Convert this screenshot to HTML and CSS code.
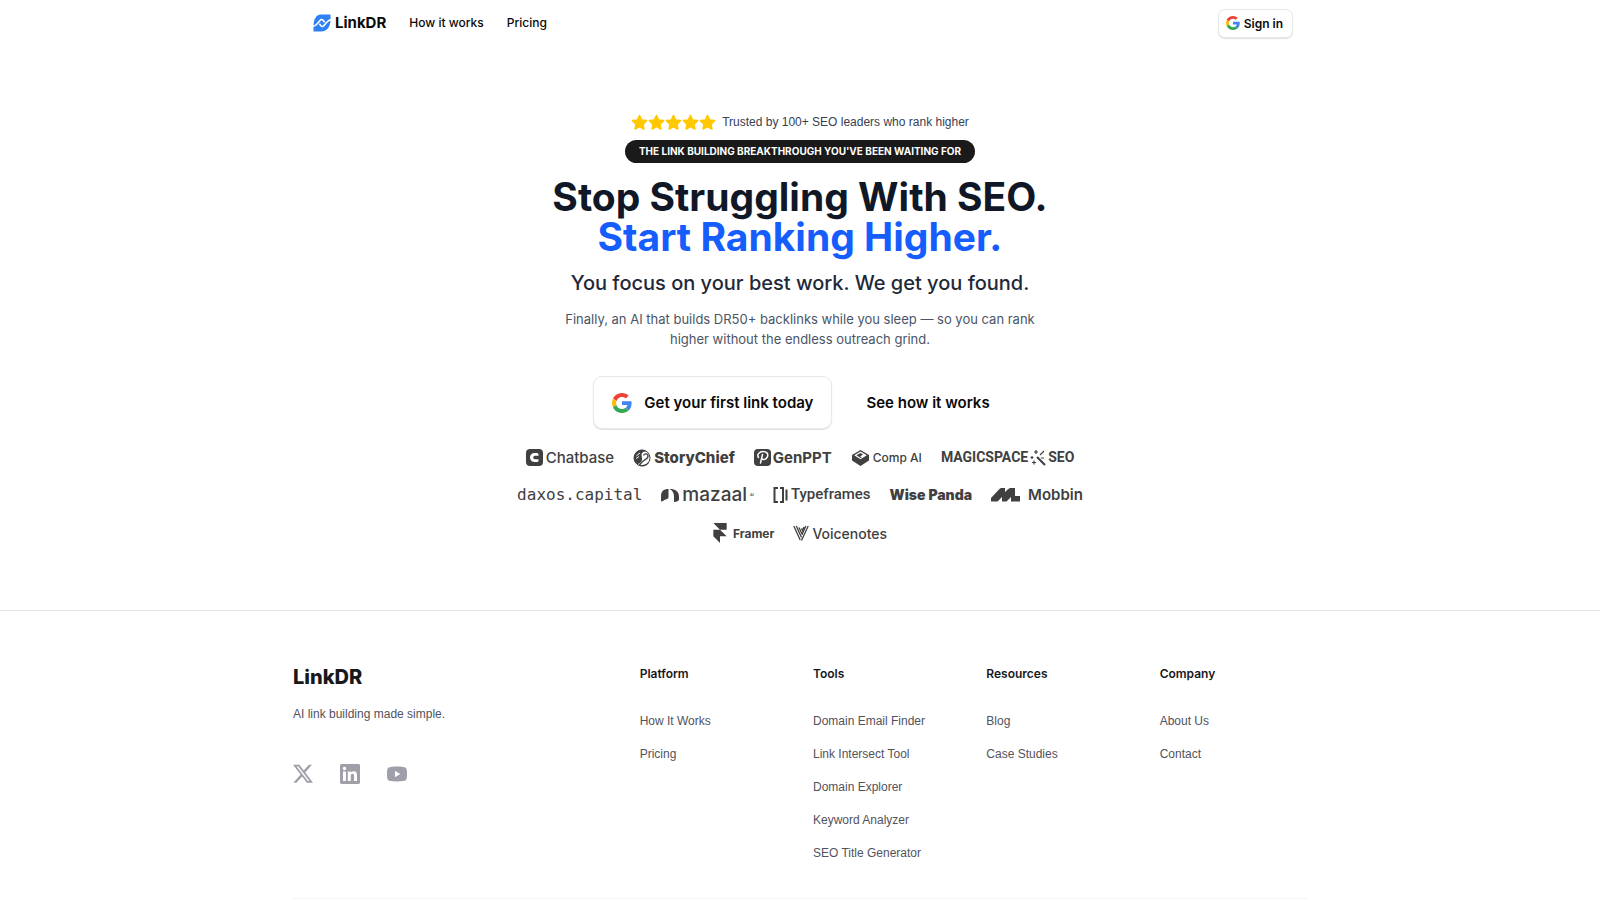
FILE: index.html
```
<!DOCTYPE html>
<html lang="en">
<head>
    <meta charset="UTF-8">
    <meta name="viewport" content="width=device-width, initial-scale=1.0">
    <title>LinkDR</title>
    <link rel="stylesheet" href="styles.css">
</head>
<body>
    <!-- shared shapes -->
    <svg class="defs" width="0" height="0" aria-hidden="true">
        <symbol id="google" viewBox="0 0 48 48">
            <path fill="#ea4335" d="M24 9.5c3.54 0 6.71 1.22 9.21 3.6l6.85-6.85C35.9 2.38 30.47 0 24 0 14.62 0 6.51 5.38 2.56 13.22l7.98 6.19C12.43 13.72 17.74 9.5 24 9.5z"/>
            <path fill="#4285f4" d="M46.98 24.55c0-1.57-.15-3.09-.38-4.55H24v9.02h12.94c-.58 2.96-2.26 5.48-4.78 7.18l7.73 6c4.51-4.18 7.09-10.36 7.09-17.65z"/>
            <path fill="#fbbc05" d="M10.53 28.59c-.48-1.45-.76-2.99-.76-4.59s.27-3.14.76-4.59l-7.98-6.19C.92 16.46 0 20.12 0 24s.92 7.54 2.56 10.78l7.97-6.19z"/>
            <path fill="#34a853" d="M24 48c6.48 0 11.93-2.13 15.89-5.81l-7.73-6c-2.15 1.45-4.92 2.3-8.16 2.3-6.26 0-11.57-4.22-13.47-9.91l-7.98 6.19C6.51 42.62 14.62 48 24 48z"/>
        </symbol>
        <symbol id="star" viewBox="0 0 24 24">
            <path d="M12 2.2l3 6.3 6.9.9-5 4.8 1.2 6.9-6.1-3.4-6.1 3.4 1.2-6.9-5-4.8 6.9-.9z" stroke="currentColor" stroke-width="2.4" stroke-linejoin="round" fill="currentColor"/>
        </symbol>
    </svg>

    <header class="header">
        <nav class="nav">
            <a href="#" class="brand">
                <svg width="18" height="18" viewBox="0 0 18 18">
                    <path fill="#2f80f5" d="M8 .5h9.500V6c0 7-4 11.500-9.500 11.500H.5V12C.5 5 3.500.5 8 .5z"/>
                    <path fill="none" stroke="#fff" stroke-width="1.600" d="M0 12.300c2 0 3.200-1.300 4.500-2.800L7 6.500c1-1.200 2.200-1.200 3.100-.2l1.500 1.900M18 5.700c-2 0-3.200 1.300-4.500 2.800L11 11.500c-1 1.200-2.200 1.200-3.100.2L6.400 9.800"/>
                </svg>
                LinkDR
            </a>
            <a href="#" class="nav-link">How it works</a>
            <a href="#" class="nav-link">Pricing</a>
        </nav>
        <button type="button" class="btn btn-small">
            <svg width="14" height="14"><use href="#google"/></svg>
            Sign in
        </button>
    </header>

    <main class="hero">
        <div class="trust">
            <div class="stars">
                <svg width="17" height="17"><use href="#star"/></svg>
                <svg width="17" height="17"><use href="#star"/></svg>
                <svg width="17" height="17"><use href="#star"/></svg>
                <svg width="17" height="17"><use href="#star"/></svg>
                <svg width="17" height="17"><use href="#star"/></svg>
            </div>
            <span>Trusted by 100+ SEO leaders who rank higher</span>
        </div>
        <div class="pill">THE LINK BUILDING BREAKTHROUGH YOU'VE BEEN WAITING FOR</div>
        <h1 class="title">Stop Struggling With SEO.<br><span class="accent">Start Ranking Higher.</span></h1>
        <h2 class="subtitle">You focus on your best work. We get you found.</h2>
        <p class="lead">Finally, an AI that builds DR50+ backlinks while you sleep — so you can rank<br>higher without the endless outreach grind.</p>

        <div class="actions">
            <button type="button" class="btn btn-large">
                <svg width="20" height="20"><use href="#google"/></svg>
                Get your first link today
            </button>
            <a href="#" class="see-how">See how it works</a>
        </div>

        <div class="logos">
            <div class="logo chatbase">
                <svg width="17" height="17" viewBox="0 0 17 17">
                    <rect width="17" height="17" rx="4" fill="currentColor"/>
                    <path d="M12.500 6.700V5.500A1.500 1.500 0 0 0 11 4H8.500a4.500 4.500 0 0 0 0 9H11a1.500 1.500 0 0 0 1.500-1.500v-1.200H9a1.800 1.800 0 0 1 0-3.600z" fill="#fff"/>
                </svg>
                <span>Chatbase</span>
            </div>
            <div class="logo storychief">
                <svg width="18" height="18" viewBox="0 0 18 18">
                    <circle cx="9" cy="9" r="8" fill="#fff" stroke="currentColor" stroke-width="1"/>
                    <path d="M1 9a8 8 0 0 1 13-6.300C11 2 8.500 3.500 8.500 6c0 2 1 3 .5 5-.4 1.800-2 3.300-4.500 4.200A8 8 0 0 1 1 9z" fill="currentColor"/>
                    <path d="M10.500 6.500c1-2 3.500-2 4.300-.5.700 2-.8 3.800-3 4.800-2 .9-3.300 2.400-5.300 5.200 3.500 1.200 7 .5 9-2.500" fill="none" stroke="currentColor" stroke-width="1.300"/>
                    <path d="M3.500 6.800L7 4M3.200 9.500L6 7.500" stroke="#fff" stroke-width="1"/>
                </svg>
                <span>StoryChief</span>
            </div>
            <div class="logo genppt">
                <svg width="17" height="17" viewBox="0 0 17 17">
                    <rect width="17" height="17" rx="4" fill="currentColor"/>
                    <path d="M8.500 5.500L6.500 14M4.500 8.500c-2-3 1-6 4.500-6s5.500 2 4.500 5-4.500 4-6 2" fill="none" stroke="#fff" stroke-width="1.500" stroke-linecap="round"/>
                </svg>
                <span>GenPPT</span>
            </div>
            <div class="logo comp">
                <svg width="19" height="18" viewBox="0 0 19 18">
                    <path d="M9.500 1L18 6v5.500L9.500 17 1 11.500V6z" fill="currentColor"/>
                    <path d="M9.500 2.500L15.800 6.300 9.500 10.200 3.200 6.300z" fill="#fff"/>
                    <path d="M9.500 4l2.500 1.500-3 2L11 8.300 9.500 9 5.500 6.300z" fill="currentColor"/>
                </svg>
                <span>Comp AI</span>
            </div>
            <div class="logo magic">
                <span>MAGICSPACE</span>
                <svg width="16" height="16" viewBox="0 0 16 16">
                    <path d="M7 7l8 8" stroke="currentColor" stroke-width="2.200"/>
                    <path d="M6 0v4M4 2h4M2 6v3M.5 7.500h3M4 10.500v4M2 12.500h4M14 1l-4 4M11 8h3" stroke="currentColor" stroke-width="1.200"/>
                </svg>
                <span>SEO</span>
            </div>
            <div class="logo daxos"><span>daxos.capital</span></div>
            <div class="logo mazaal">
                <svg width="18" height="14" viewBox="0 0 18 14">
                    <path d="M0 13.500V8C0 3.500 2.500 1 7.500 1v8c0 2-1.500 2-3 2.500S2 13.500 0 13.500zM8.500 1c6 0 9.500 2.500 9.500 7.500V12c-1 1.200-2.500 2-5 2V8.500c0-3.500-1.500-6-4.500-7.500z" fill="currentColor"/>
                </svg>
                <span>mazaal</span>
                <small>AI</small>
            </div>
            <div class="logo typeframes">
                <svg width="15" height="16" viewBox="0 0 15 16">
                    <path d="M5 1H1.500v14H5M7 1h3v14H7M13.500 2.500v11" fill="none" stroke="currentColor" stroke-width="2"/>
                </svg>
                <span>Typeframes</span>
            </div>
            <div class="logo panda"><span>Wise Panda</span></div>
            <div class="logo mobbin">
                <svg width="29" height="14" viewBox="0 0 29 14">
                    <path d="M0 13.500V10L8 1.500C9 .4 10 0 11 0h3v4l3-2.800C18 .3 19 0 20 0h4v8h5v5.500h-9V9l-4.500 4.500H11V9l-4.500 4.500z" fill="currentColor"/>
                </svg>
                <span>Mobbin</span>
            </div>
            <div class="logo framer">
                <svg width="14" height="20" viewBox="4 0 16 24">
                    <path d="M4 0h16v8h-8zM4 8h8l8 8H4zM4 16h8v8z" fill="currentColor"/>
                </svg>
                <span>Framer</span>
            </div>
            <div class="logo voicenotes">
                <svg width="16" height="16" viewBox="0 0 16 16">
                    <path d="M.8 1l6.400 14M3.300 1l5.200 11.500M6 2.500l3.500 7.500M8.500 3.500l2 4M15.200 1L8.500 15.500M12.800 1L9 9.500M11 2L9.800 4.500" fill="none" stroke="currentColor" stroke-width="1.300"/>
                </svg>
                <span>Voicenotes</span>
            </div>
        </div>
    </main>

    <footer class="footer">
        <div class="footer-grid">
            <div class="about">
                <h2>LinkDR</h2>
                <p>AI link building made simple.</p>
                <div class="social">
                    <a href="#" aria-label="X"><svg width="20" height="20" viewBox="0 0 24 24"><path d="M18.244 1.250h3.308l-7.227 8.260 8.502 11.240H16.170l-5.214-6.817L4.990 20.750H1.680l7.730-8.835L1.254 1.250H8.080l4.713 6.231zm-1.161 17.520h1.833L7.084 3.126H5.117z" transform="translate(-1.400 -.6) scale(1.120)"/></svg></a>
                    <a href="#" aria-label="LinkedIn"><svg width="20" height="20" viewBox="0 0 24 24"><path d="M20.447 20.452h-3.554v-5.569c0-1.328-.027-3.037-1.852-3.037-1.853 0-2.136 1.445-2.136 2.939v5.667H9.351V9h3.414v1.561h.046c.477-.9 1.637-1.850 3.370-1.850 3.601 0 4.267 2.370 4.267 5.455v6.286zM5.337 7.433a2.062 2.062 0 1 1 0-4.125 2.062 2.062 0 0 1 0 4.125zm1.782 13.019H3.555V9h3.564v11.452zM22.225 0H1.771C.792 0 0 .774 0 1.729v20.542C0 23.227.792 24 1.771 24h20.451C23.200 24 24 23.227 24 22.271V1.729C24 .774 23.200 0 22.222 0h.003z"/></svg></a>
                    <a href="#" aria-label="YouTube"><svg width="20" height="20" viewBox="0 0 24 24"><path d="M4.500 3.500C9 3 15 3 19.500 3.500c3 .3 4.100 1.400 4.300 4.200.3 3 .3 5.600 0 8.600-.2 2.800-1.300 3.900-4.300 4.200-4.500.5-10.500.5-15 0-3-.3-4.100-1.400-4.300-4.200-.3-3-.3-5.600 0-8.600.2-2.800 1.300-3.900 4.300-4.200zM9.500 8.200v7.600l6.500-3.800z"/></svg></a>
                </div>
            </div>
            <div class="links">
                <h3>Platform</h3>
                <a href="#">How It Works</a>
                <a href="#">Pricing</a>
            </div>
            <div class="links">
                <h3>Tools</h3>
                <a href="#">Domain Email Finder</a>
                <a href="#">Link Intersect Tool</a>
                <a href="#">Domain Explorer</a>
                <a href="#">Keyword Analyzer</a>
                <a href="#">SEO Title Generator</a>
            </div>
            <div class="links">
                <h3>Resources</h3>
                <a href="#">Blog</a>
                <a href="#">Case Studies</a>
            </div>
            <div class="links">
                <h3>Company</h3>
                <a href="#">About Us</a>
                <a href="#">Contact</a>
            </div>
        </div>
    </footer>
</body>
</html>
```
FILE: styles.css
```
* {
    box-sizing: border-box;
}
body {
    margin: 0;
    font-family: Inter, "Liberation Sans", sans-serif;
    font-size: 12px;
    line-height: 20px;
    color: #0a0a0a;
    background-color: #fff;
}
h1, h2, h3, p {
    margin: 0;
}
a {
    color: inherit;
    text-decoration: none;
}
svg {
    display: block;
    flex-shrink: 0;
}
.defs {
    position: absolute;
}
.header {
    display: flex;
    align-items: center;
    justify-content: space-between;
    max-width: 1014px;
    height: 46px;
    margin: 0 auto;
    padding: 0 14px 0 20px;
}
.nav {
    display: flex;
    align-items: center;
    gap: 23px;
}
.brand {
    display: flex;
    align-items: center;
    gap: 4px;
    font-size: 15px;
    font-weight: 700;
}
.nav-link {
    font-weight: 500;
}
.btn {
    display: flex;
    align-items: center;
    font-family: inherit;
    color: #0a0a0a;
    background-color: #fff;
    border: 1px solid #e8e8e8;
    box-shadow: 0 1px 1px rgba(0, 0, 0, 0.12);
    cursor: pointer;
}
.btn-small {
    gap: 4px;
    height: 29px;
    padding: 0 9px 0 7px;
    font-size: 12px;
    font-weight: 600;
    border-radius: 7px;
}
.btn-large {
    gap: 12px;
    height: 53px;
    padding: 0 18px;
    font-size: 15px;
    font-weight: 600;
    border-radius: 9px;
}
.hero {
    display: flex;
    flex-direction: column;
    align-items: center;
    padding: 66px 16px 66px;
    text-align: center;
}
.trust {
    display: flex;
    align-items: center;
    gap: 6px;
    font-family: "Liberation Sans", sans-serif;
    color: #364153;
}
.stars {
    display: flex;
    color: #ffc800;
}
.pill {
    margin-top: 8px;
    padding: 0 14px;
    font-size: 10px;
    font-weight: 700;
    line-height: 23px;
    color: #fff;
    background-color: #1a1a1a;
    border-radius: 12px;
}
.title {
    margin-top: 14px;
    font-size: 39px;
    line-height: 40px;
    font-weight: 700;
    color: #101828;
}
.accent {
    color: #155dfc;
}
.subtitle {
    margin-top: 12px;
    font-size: 20px;
    line-height: 28px;
    font-weight: 500;
    color: #1e2939;
}
.lead {
    margin-top: 12px;
    font-size: 13px;
    line-height: 20px;
    color: #4a5565;
}
.actions {
    display: flex;
    align-items: center;
    gap: 17px;
    margin-top: 27px;
}
.see-how {
    padding: 0 17px;
    font-size: 15px;
    font-weight: 600;
}
.logos {
    display: flex;
    flex-wrap: wrap;
    justify-content: center;
    gap: 18px 19px;
    max-width: 590px;
    margin-top: 19px;
    color: #404040;
}
.logo {
    display: flex;
    align-items: center;
    gap: 3px;
    height: 19px;
    line-height: 19px;
}
.chatbase, .storychief {
    font-size: 15px;
    font-weight: 500;
}
.storychief {
    font-weight: 800;
}
.genppt {
    gap: 2px;
    font-size: 15px;
    font-weight: 700;
}
.comp {
    font-size: 12px;
    font-weight: 500;
}
.magic {
    gap: 2px;
    font-family: Roboto, sans-serif;
    font-size: 14px;
    font-weight: 700;
}
.daxos {
    font-family: "DejaVu Sans Mono", monospace;
    font-size: 16px;
}
.mazaal {
    font-size: 19px;
    font-weight: 500;
}
.mazaal small {
    font-size: 4px;
}
.typeframes {
    font-family: Roboto, sans-serif;
    font-size: 15px;
    font-weight: 500;
}
.panda {
    font-size: 14px;
    font-weight: 900;
}
.mobbin {
    gap: 8px;
    font-size: 15px;
    font-weight: 600;
}
.framer {
    gap: 6px;
    font-size: 12px;
    font-weight: 700;
}
.voicenotes {
    font-size: 14px;
    font-weight: 500;
}
.framer, .voicenotes {
    height: 22px;
}
.footer {
    border-top: 1px solid #e5e5e5;
    padding: 53px 16px 0;
}
.footer-grid {
    display: grid;
    grid-template-columns: repeat(6, 1fr);
    column-gap: 26px;
    max-width: 1014px;
    margin: 0 auto;
    padding-bottom: 29px;
    font-family: "Liberation Sans", sans-serif;
    border-bottom: 1px solid #f3f4f6;
}
.about {
    grid-column: span 2;
}
.about h2 {
    font-family: Inter, sans-serif;
    font-size: 20px;
    line-height: 26px;
    font-weight: 800;
    color: #18181b;
}
.about p {
    margin-top: 14px;
    color: #52525c;
}
.social {
    display: flex;
    gap: 27px;
    margin-top: 40px;
}
.social svg {
    fill: #9f9fa9;
}
.links h3 {
    margin-bottom: 20px;
    font-family: Inter, sans-serif;
    font-size: 12px;
    line-height: 20px;
    font-weight: 600;
    color: #18181b;
}
.links a {
    display: block;
    padding: 7px 0 6px;
    color: #52525c;
}
```
